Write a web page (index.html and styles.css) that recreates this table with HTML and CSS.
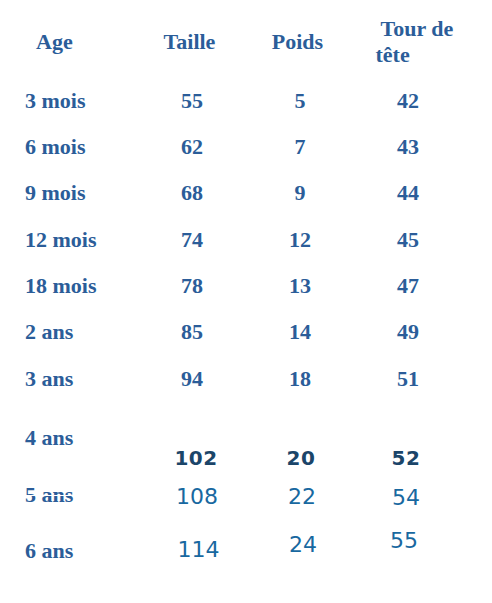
FILE: index.html
```html
<!DOCTYPE html>
<html lang="fr">
<head>
<meta charset="utf-8">
<title>Croissance</title>
<link rel="stylesheet" href="styles.css">
</head>
<body>
<div class="sheet">
  <div class="row head">
    <div class="c1 age-h">Age</div>
    <div class="num h-taille">Taille</div>
    <div class="num h-poids">Poids</div>
    <div class="h-tour">Tour de<br>tête</div>
  </div>
  <div class="row"><div class="c1">3 mois</div><div class="num">55</div><div class="num">5</div><div class="num">42</div></div>
  <div class="row"><div class="c1">6 mois</div><div class="num">62</div><div class="num">7</div><div class="num">43</div></div>
  <div class="row"><div class="c1">9 mois</div><div class="num">68</div><div class="num">9</div><div class="num">44</div></div>
  <div class="row"><div class="c1">12 mois</div><div class="num">74</div><div class="num">12</div><div class="num">45</div></div>
  <div class="row"><div class="c1">18 mois</div><div class="num">78</div><div class="num">13</div><div class="num">47</div></div>
  <div class="row"><div class="c1">2 ans</div><div class="num">85</div><div class="num">14</div><div class="num">49</div></div>
  <div class="row"><div class="c1">3 ans</div><div class="num">94</div><div class="num">18</div><div class="num">51</div></div>
  <div class="row r8">
    <div class="c1 l8">4 ans</div>
    <div class="num sb t102">102</div>
    <div class="num sb t20">20</div>
    <div class="num sb t52">52</div>
  </div>
  <div class="row r9">
    <div class="c1 cut">5 ans</div>
    <div class="num sr t108">108</div>
    <div class="num sr t22">22</div>
    <div class="num sr t54">54</div>
  </div>
  <div class="row r10">
    <div class="c1 l10">6 ans</div>
    <div class="num sr t114">114</div>
    <div class="num sr t24">24</div>
    <div class="num sr t55">55</div>
  </div>
</div>
</body>
</html>
```

FILE: styles.css
```css
html, body {
  margin: 0;
  padding: 0;
  background: #ffffff;
}

.sheet {
  width: 492px;
  height: 603px;
  box-sizing: border-box;
  padding-top: 15.6px;
  font-family: "Liberation Serif", "Times New Roman", serif;
  font-weight: bold;
  font-size: 22px;
  line-height: 22px;
  color: #2b5d99;
}

.row {
  display: grid;
  grid-template-columns: 140px 104px 112px 104px;
  align-items: start;
  height: 46.33px;
}

.c1 {
  padding-left: 25px;
  white-space: nowrap;
}

.num {
  text-align: center;
  white-space: nowrap;
}

/* header */
.head {
  height: 74px;
}
.age-h {
  padding-left: 36px;
  margin-top: 15px;
}
.h-taille,
.h-poids {
  margin-top: 15px;
  padding-right: 5px;
}
.h-tour {
  line-height: 26px;
  padding-left: 19.5px;
  text-indent: 5px;
  white-space: nowrap;
}

/* lower irregular rows */
.r8 { height: 69.7px; }
.r9 { height: 46px; }
.r10 { height: 60px; }

.l8 { margin-top: 12.7px; }
.l10 { margin-top: 10px; }

.cut {
  text-decoration-line: line-through;
  text-decoration-color: #ffffff;
  text-decoration-thickness: 1px;
}

.sb {
  font-family: "DejaVu Sans", Verdana, sans-serif;
  font-weight: bold;
  font-size: 20px;
  line-height: 20px;
  color: #1b4569;
  letter-spacing: 0.5px;
}
.sr {
  font-family: "DejaVu Sans", Verdana, sans-serif;
  font-weight: normal;
  font-size: 22px;
  line-height: 22px;
  color: #1868a0;
}

.t102 { margin-top: 34px; padding-left: 8px; }
.t20  { margin-top: 34px; padding-left: 2px; }
.t52  { margin-top: 34px; padding-right: 4px; }

.t108 { margin-top: 2px; padding-left: 10px; }
.t22  { margin-top: 2.8px; padding-left: 4px; }
.t54  { margin-top: 3px; padding-right: 4px; }

.t114 { margin-top: 9.5px; padding-left: 13px; }
.t24  { margin-top: 4.8px; padding-left: 6px; }
.t55  { margin-top: 0; padding-right: 8px; }
```
